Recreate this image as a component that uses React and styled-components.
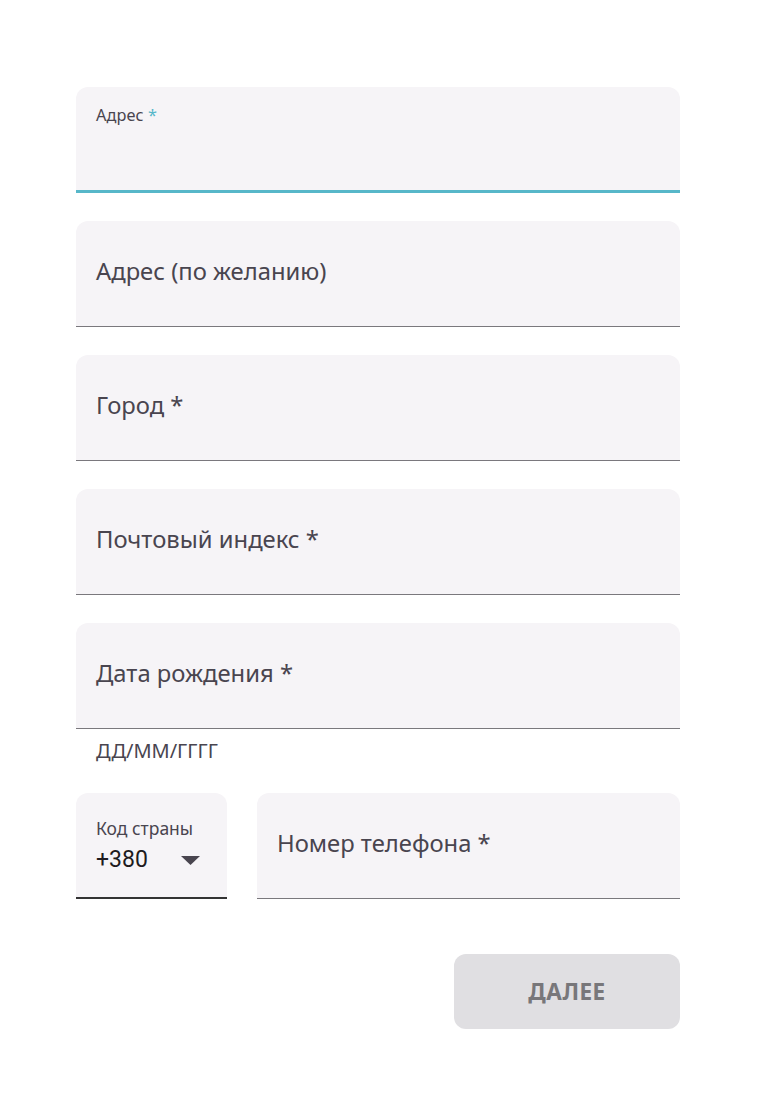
import React from "react";
import styled, { createGlobalStyle } from "styled-components";

const GlobalStyle = createGlobalStyle`
  html, body {
    margin: 0;
    padding: 0;
    background: #ffffff;
  }
  body {
    font-family: "Noto Sans", "Open Sans", sans-serif;
    color: #49454f;
  }
`;

const Page = styled.div`
  width: 760px;
  min-height: 1110px;
  box-sizing: border-box;
  padding: 87px 80px 0 76px;
`;

const Form = styled.div`
  width: 604px;
  display: flex;
  flex-direction: column;
  gap: 28px;
`;

const Field = styled.div`
  position: relative;
  height: 106px;
  box-sizing: border-box;
  background: #f6f4f7;
  border-radius: 12px 12px 0 0;
  border-bottom: ${(p) => (p.$focused ? "3px solid #57b7c9" : p.$dark ? "2px solid #333333" : "1.5px solid #7a787d")};
  display: flex;
  flex-direction: column;
  justify-content: center;
  padding: 0 20px;
  width: ${(p) => p.$width || "auto"};
  flex: ${(p) => p.$grow || "none"};
`;

const FloatLabel = styled.span`
  position: absolute;
  top: 17px;
  left: 20px;
  font-size: 16.3px;
  color: #49454f;
  letter-spacing: 0.1px;
`;

const Star = styled.span`
  color: ${(p) => (p.$accent ? "#57b7c9" : "inherit")};
`;

const Placeholder = styled.span`
  font-size: 23.8px;
  color: #49454f;
  margin-top: -5px;
`;

const Group = styled.div`
  display: flex;
  flex-direction: column;
`;

const Helper = styled.div`
  font-size: 20px;
  line-height: 28px;
  color: #49454f;
  padding-left: 20px;
  margin-top: 8px;
`;

const Row = styled.div`
  display: flex;
  gap: 30px;
`;

const SelectField = styled(Field)`
  justify-content: flex-start;
  padding-top: 23px;
`;

const SmallLabel = styled.span`
  font-size: 17.5px;
  line-height: 24px;
  color: #49454f;
`;

const SelectValue = styled.div`
  display: flex;
  align-items: center;
  justify-content: space-between;
  margin-top: 6px;
  font-family: Roboto, "Noto Sans", sans-serif;
  font-size: 23px;
  line-height: 28px;
  color: #1d1b20;
`;

const Caret = styled.svg`
  width: 19px;
  height: 9px;
  margin-right: 7px;
`;

const Actions = styled.div`
  display: flex;
  justify-content: flex-end;
  margin-top: 27px;
`;

const Button = styled.button`
  width: 226px;
  height: 75px;
  border: none;
  border-radius: 12px;
  background: #e0dfe2;
  color: #78777a;
  font-family: "Noto Sans", "Open Sans", sans-serif;
  font-weight: 700;
  font-size: 22.5px;
  letter-spacing: 0.5px;
`;

export default function App() {
  return (
    <Page>
      <GlobalStyle />
      <Form>
        <Field $focused>
          <FloatLabel>
            Адрес <Star $accent>*</Star>
          </FloatLabel>
        </Field>
        <Field>
          <Placeholder>Адрес (по желанию)</Placeholder>
        </Field>
        <Field>
          <Placeholder>Город *</Placeholder>
        </Field>
        <Field>
          <Placeholder>Почтовый индекс *</Placeholder>
        </Field>
        <Group>
          <Field>
            <Placeholder>Дата рождения *</Placeholder>
          </Field>
          <Helper>ДД/ММ/ГГГГ</Helper>
        </Group>
        <Row>
          <SelectField $width="151px" $dark>
            <SmallLabel>Код страны</SmallLabel>
            <SelectValue>
              +380
              <Caret viewBox="0 0 19 9">
                <path d="M0 0 L19 0 L9.5 9 Z" fill="#49454f" />
              </Caret>
            </SelectValue>
          </SelectField>
          <Field $grow="1">
            <Placeholder>Номер телефона *</Placeholder>
          </Field>
        </Row>
        <Actions>
          <Button>ДАЛЕЕ</Button>
        </Actions>
      </Form>
    </Page>
  );
}
